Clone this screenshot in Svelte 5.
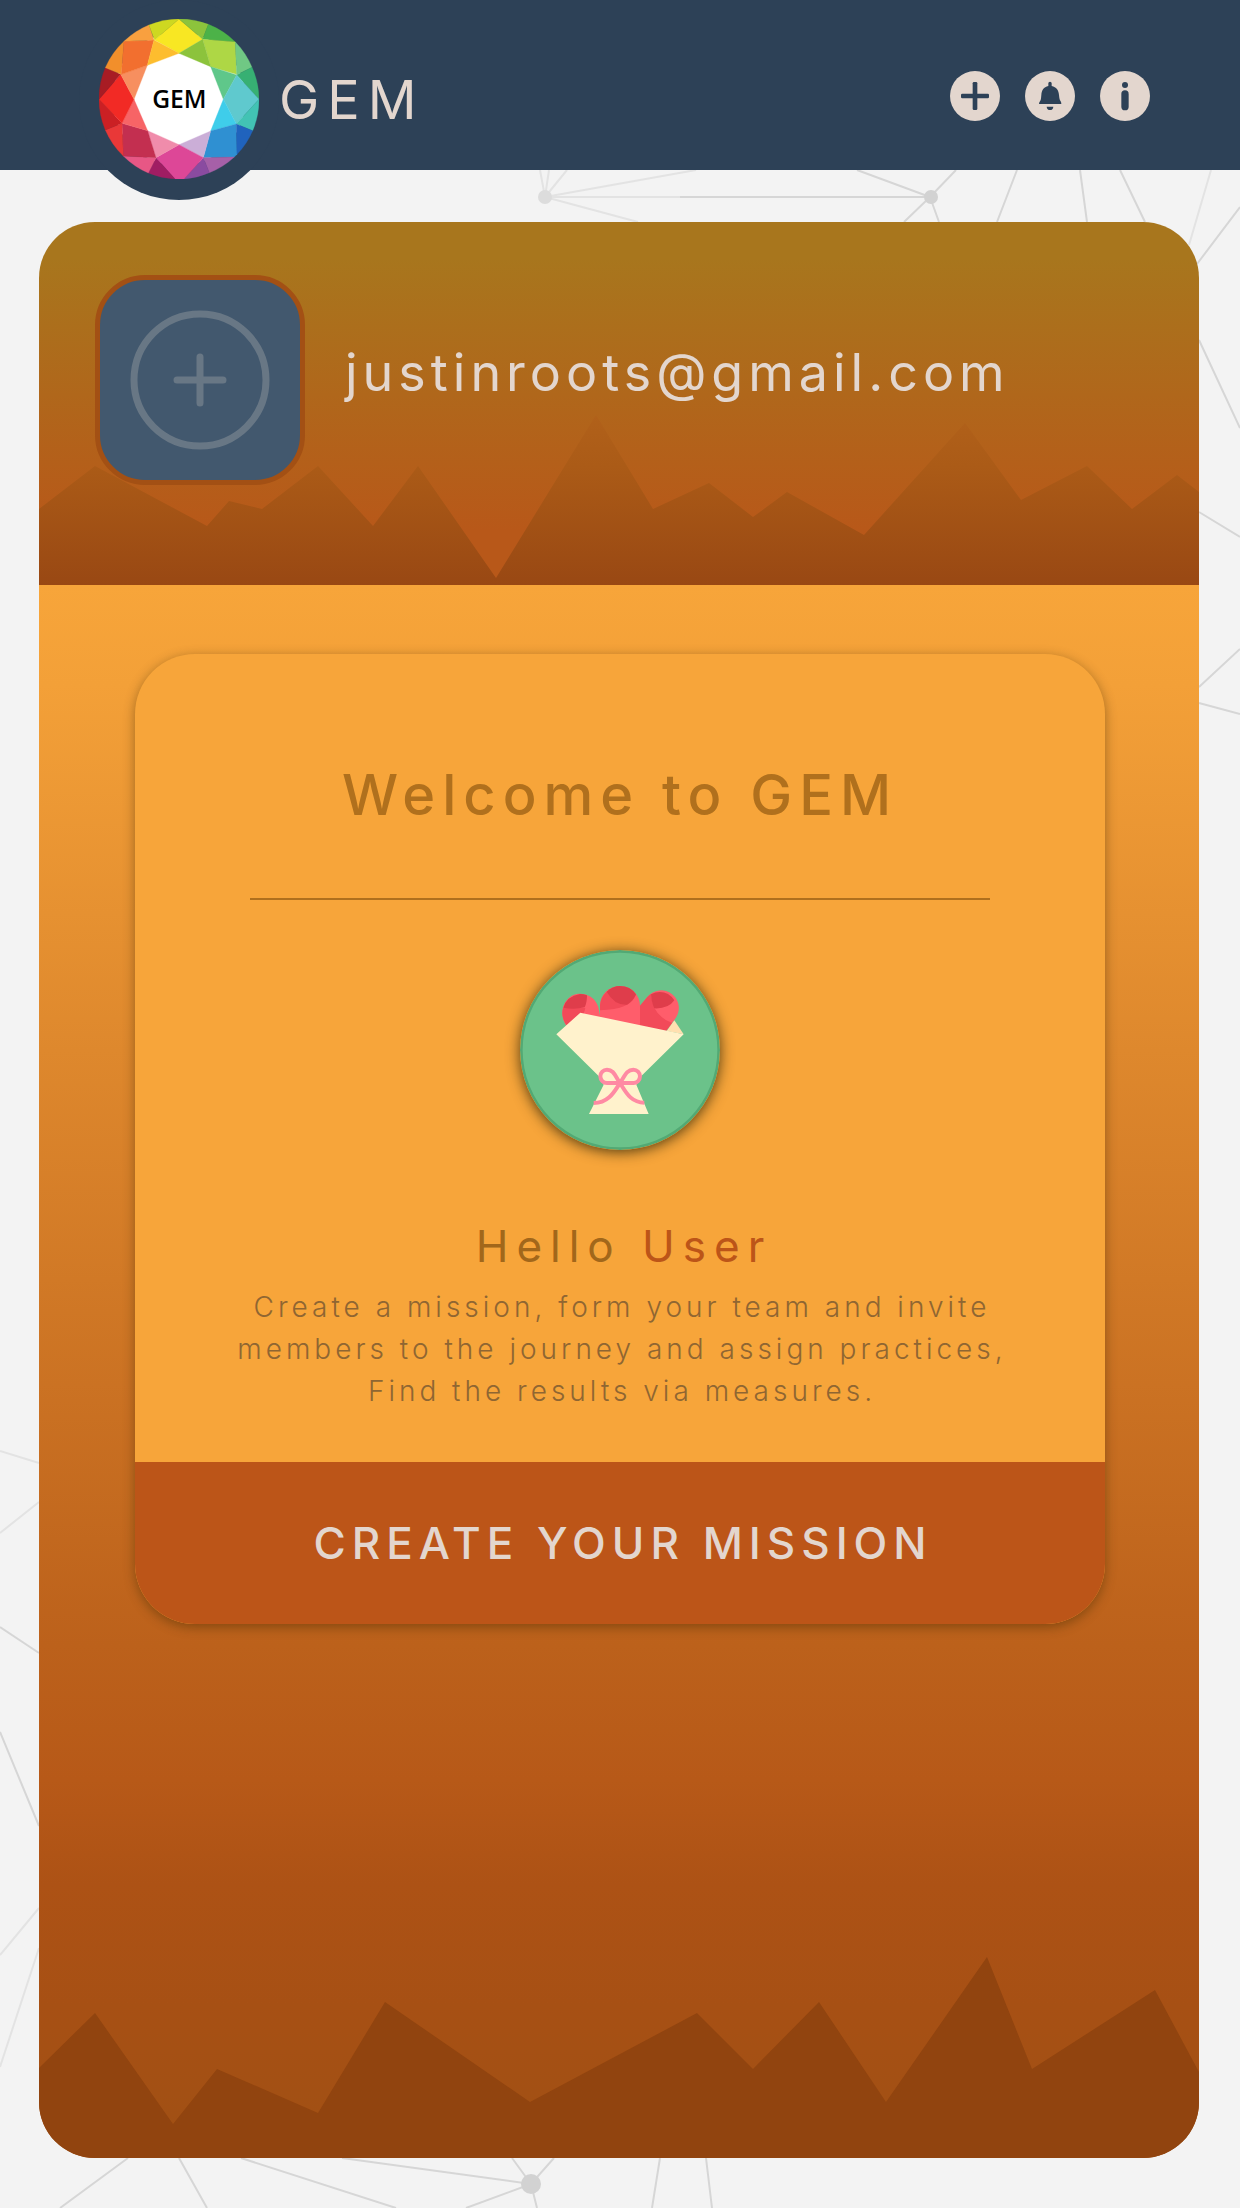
<script>
  const facets = [
    ['#f8e723', 'M297 57L368 118L297 160L224 120Z'],
    ['#8cc33c', 'M297 57A240 240 0 0 1 385 73L368 118Z'],
    ['#4cb248', 'M385 73A240 240 0 0 1 466 126L368 118Z'],
    ['#aed745', 'M368 118L466 126L470 223L392 200Z'],
    ['#8cc33c', 'M297 160L368 118L392 200Z'],
    ['#70c884', 'M466 126A240 240 0 0 1 516 202L470 224Z'],
    ['#37b073', 'M516 202A240 240 0 0 1 537 298L470 225Z'],
    ['#5fc78a', 'M392 200L470 225L430 298Z'],
    ['#5fc9ce', 'M470 225L537 298L469 372L430 298Z'],
    ['#42c3b4', 'M537 298A240 240 0 0 1 518 392L469 372Z'],
    ['#3fcdea', 'M430 298L469 372L392 393Z'],
    ['#2f90d2', 'M392 393L469 372L471 463L463 471L370 473Z'],
    ['#2063bd', 'M518 392A240 240 0 0 1 471 463L469 372Z'],
    ['#cbaed7', 'M297 434L392 393L370 473Z'],
    ['#a660a8', 'M463 471A240 240 0 0 1 388 518L370 473Z'],
    ['#8a4ba0', 'M388 518A240 240 0 0 1 312 537L370 473Z'],
    ['#dd4797', 'M297 434L370 473L312 537L285 537L228 473Z'],
    ['#a01d63', 'M285 537A240 240 0 0 1 205 519L228 473Z'],
    ['#f08cab', 'M203 392L297 434L228 473Z'],
    ['#e75785', 'M205 519A240 240 0 0 1 130 468L228 473Z'],
    ['#c32f50', 'M126 370L203 392L228 473L130 468Z'],
    ['#e93838', 'M130 468A240 240 0 0 1 76 390L126 370Z'],
    ['#f76466', 'M162 298L203 392L126 370Z'],
    ['#cb2024', 'M76 390A240 240 0 0 1 57 298L126 370Z'],
    ['#f22a25', 'M57 298L122 223L162 298L126 370Z'],
    ['#a81c24', 'M57 298A240 240 0 0 1 76 203L122 223Z'],
    ['#f78f5f', 'M122 223L202 196L162 298Z'],
    ['#f28f2b', 'M76 203A240 240 0 0 1 132 124L124 223Z'],
    ['#f26f2f', 'M132 124L222 120L202 196L124 223Z'],
    ['#f9a03f', 'M132 124A240 240 0 0 1 207 75L222 120Z'],
    ['#fdbd2e', 'M222 120L297 160L202 196Z'],
    ['#ced821', 'M207 75A240 240 0 0 1 297 57L224 120Z']
  ];
</script>

<div class="page">
  <svg class="web" viewBox="0 0 1240 2208" preserveAspectRatio="none" aria-hidden="true">
    <path class="faint" d="M545 197L540 170M545 197L549 170M545 197L567 170M545 197L696 170M545 197L638 222M545 197H680M1211 170L1189 245M0 1451L39 1463M0 1533L39 1502M0 1955L39 1908M0 2067L39 1948" />
    <path d="M680 197H930M930 197L857 170M930 197L956 170M930 197L904 222M930 197L939 222M1017 170L997 222M1080 170L1087 222M1120 170L1145 222M1240 207L1197 264M1199 340L1240 428M1199 512L1240 537M1199 687L1240 649M1199 703L1240 714M0 1627L39 1653M0 1732L39 1826M128 2158L60 2208M179 2158L207 2208M241 2158L396 2208M342 2158L531 2184L466 2208M512 2158L531 2184L554 2158M531 2184L537 2208M660 2158L652 2208M706 2158L712 2208" />
    <circle class="pale" cx="545" cy="197" r="7" />
    <circle cx="931" cy="197" r="7" />
    <circle cx="531" cy="2184" r="10" />
  </svg>

  <header class="topbar">
    <a class="brand" href="/">
      <span class="logo">
        <svg viewBox="57 57 480 480" aria-hidden="true">
          <circle cx="297" cy="297" r="200" fill="#fff" />
          {#each facets as [fill, d]}
            <path {d} {fill} stroke={fill} />
          {/each}
          <text x="298" y="324" text-anchor="middle">GEM</text>
        </svg>
      </span>
      <span class="name">GEM</span>
    </a>
    <nav class="actions" aria-label="Quick actions">
      <button type="button" aria-label="Add">
        <svg viewBox="90 63 150 150" aria-hidden="true">
          <rect x="123" y="131" width="84" height="14" rx="4" />
          <rect x="158" y="96" width="14" height="84" rx="4" />
        </svg>
      </button>
      <button type="button" aria-label="Notifications">
        <svg viewBox="315 63 150 150" aria-hidden="true">
          <path d="M385 100a5 5 0 0 1 10 0v8c14 3 21 13 22 27c1 11 2 15 5 19q2 3 2 8h-67q0-5 3-8c3-4 3-8 4-19c1-14 7-24 21-27z" />
          <path d="M380 170h20q-1 10-10 10t-10-10z" />
        </svg>
      </button>
      <button type="button" aria-label="Information">
        <svg viewBox="537 63 150 150" aria-hidden="true">
          <circle cx="612" cy="105" r="9" />
          <rect x="601" y="121" width="22" height="60" rx="11" />
        </svg>
      </button>
    </nav>
  </header>

  <main class="panel">
    <section class="banner">
      <svg class="peaks" viewBox="0 0 1160 170" preserveAspectRatio="none" aria-hidden="true">
        <defs>
          <linearGradient id="ridge" x1="0" y1="0" x2="0" y2="1">
            <stop offset="0" stop-color="#b1611a" />
            <stop offset="0.3" stop-color="#ab5b17" />
            <stop offset="1" stop-color="#994813" />
          </linearGradient>
        </defs>
        <path fill="url(#ridge)" d="M0 94L56 51L168 111L190 86L223 94L279 51L334 111L379 51L457 163L557 0L614 94L670 68L714 102L748 77L825 120L926 8L982 85L1048 51L1093 94L1138 60L1160 77V170H0Z" />
      </svg>
      <button class="avatar" type="button" aria-label="Add profile picture">
        <svg viewBox="0 0 140 140" aria-hidden="true">
          <circle cx="70" cy="70" r="66" />
          <path d="M70 47V93M47 70H93" />
        </svg>
      </button>
      <p class="email">justinroots@gmail.com</p>
    </section>

    <section class="content">
      <article class="card">
        <h1>Welcome to GEM</h1>
        <hr />
        <svg class="bouquet" viewBox="120 90 600 600" aria-hidden="true">
          <circle cx="420" cy="390" r="296" fill="#6bc28a" stroke="#53a974" stroke-width="8" />
          <path fill="#ff5d6b" d="M247 278a55 56 0 0 1 108-16l8 40l-90 30q-26-20-26-54z" />
          <path fill="#f24a59" d="M247 278q0-8 3-14h66q-4 22-20 34l-30 24q-19-18-19-44z" />
          <path fill="#df3d4b" d="M250 263q10-34 50-41q11 0 21 4q0 22-7 36q-32 8-64 1z" />
          <path fill="#ff5d6b" d="M360 258a60 60 0 0 1 120 0v70H360z" />
          <path fill="#f24a59" d="M360 271v-16q2-24 20-40l88 8q-14 46-108 48z" />
          <path fill="#df3d4b" d="M380 215q17-17 40-17q31 0 48 25q-8 20-27 31q-38 2-61-39z" />
          <path fill="#ff5d6b" d="M480 257l22-26a53 53 0 0 1 83 66l-27 36l-78-14z" />
          <path fill="#f24a59" d="M480 257l22-26q6-6 11-9q4 66 64 87l-19 24l-78-14z" />
          <path fill="#df3d4b" d="M513 223q13-7 26-7q28 0 44 25q-18 26-60 24q-8-15-10-42z" />
          <path fill="#ffe0b0" d="M583 301L611 343L560 333Z" />
          <path fill="#fff2cc" d="M301 278L611 343L484 468L469 494L506 582H327L371 494L356 468L229 343Z" />
          <g fill="none" stroke="#ff8aa3" stroke-width="12">
            <path d="M420 489H381a20 20 0 0 1 0-40c20 0 24 18 39 40s30 59 73 59" />
            <path d="M420 489H460a20 20 0 0 0 0-40c-20 0-25 18-40 40s-32 60-79 60" />
          </g>
        </svg>
        <h2>Hello <span>User</span></h2>
        <p class="intro">
          Create a mission, form your team and invite<br />
          members to the journey and assign practices,<br />
          Find the results via measures.
        </p>
        <button class="cta" type="button">CREATE YOUR MISSION</button>
      </article>
      <svg class="hills" viewBox="0 0 1160 201" preserveAspectRatio="none" aria-hidden="true">
        <path d="M0 111L56 56L134 167L178 112L279 156L346 45L491 145L658 56L714 112L780 45L847 145L948 0L993 112L1116 33L1160 115V201H0Z" />
      </svg>
    </section>
  </main>
</div>

<style>
  :global(body) {
    margin: 0;
    background: #f3f3f3;
  }

  .page {
    position: relative;
    padding-bottom: 50px;
    font-family: Inter, "Liberation Sans", sans-serif;
    overflow: hidden;
  }

  button {
    border: 0;
    padding: 0;
    font: inherit;
    cursor: pointer;
  }

  svg {
    display: block;
  }

  .web {
    position: absolute;
    inset: 0;
    width: 100%;
    height: 100%;
    fill: #d2d2d2;
  }

  .web path {
    fill: none;
    stroke: #d6d6d6;
    stroke-width: 2;
  }

  .web .faint {
    stroke: #e3e3e3;
  }

  .web .pale {
    fill: #dcdcdc;
  }

  .topbar {
    position: relative;
    display: flex;
    justify-content: space-between;
    align-items: flex-start;
    height: 170px;
    padding: 0 90px 0 79px;
    background: #2d4157;
  }

  .brand {
    display: flex;
    align-items: center;
    color: #e3d6ce;
    text-decoration: none;
  }

  .logo {
    padding: 19px 20px 21px;
    border-radius: 50%;
    background: #2d4157;
  }

  .logo svg {
    width: 160px;
    height: 160px;
  }

  .logo text {
    font-family: "Open Sans", sans-serif;
    font-size: 74px;
    font-weight: 600;
  }

  .name {
    font-size: 54px;
    line-height: 60px;
    letter-spacing: 8px;
  }

  .actions {
    display: flex;
    gap: 25px;
    padding-top: 71px;
  }

  .actions button {
    width: 50px;
    height: 50px;
    border-radius: 50%;
    background: #e3d6ce;
    fill: #2d4157;
  }

  .panel {
    position: relative;
    margin: 52px 41px 0 39px;
    border-radius: 56px;
    overflow: hidden;
  }

  .banner {
    position: relative;
    display: flex;
    align-items: flex-start;
    gap: 40px;
    box-sizing: border-box;
    height: 363px;
    padding: 53px 56px;
    background: linear-gradient(#a8761d 10%, #b85819 85%);
  }

  .peaks {
    position: absolute;
    left: 0;
    bottom: 0;
    width: 100%;
    height: 170px;
  }

  .avatar {
    position: relative;
    display: grid;
    place-items: center;
    flex: none;
    width: 210px;
    height: 210px;
    border: 5px solid #a35014;
    border-radius: 50px;
    background: #42586e;
  }

  .avatar svg {
    width: 140px;
    height: 140px;
    fill: none;
    stroke: #687785;
    stroke-width: 7;
    stroke-linecap: round;
  }

  .email {
    position: relative;
    margin: 63px 0 0;
    color: #e3d6ce;
    font-size: 52px;
    line-height: 70px;
    letter-spacing: 5px;
  }

  .content {
    padding-top: 69px;
    background: linear-gradient(#f7a53a 0, #f3a038 100px, #bc611b 1060px, #b75918 1195px, #ad5215 1300px, #a75014 1420px, #a05014 100%);
  }

  .card {
    display: flex;
    flex-direction: column;
    align-items: center;
    margin: 0 94px 333px 96px;
    padding-top: 101px;
    border-radius: 60px;
    overflow: hidden;
    background: #f7a53a;
    box-shadow: 0 3px 12px rgba(60, 40, 0, 0.45);
    text-align: center;
  }

  h1,
  h2,
  .intro {
    margin: 0;
    font-weight: 400;
  }

  h1 {
    color: #b0701d;
    font-size: 56px;
    font-weight: 500;
    line-height: 80px;
    letter-spacing: 7px;
  }

  hr {
    align-self: stretch;
    height: 2px;
    margin: 63px 115px 50px;
    border: 0;
    background: #b0701d;
  }

  .bouquet {
    width: 200px;
    height: 200px;
    border-radius: 50%;
    box-shadow: 0 2px 14px rgba(50, 40, 10, 0.85);
  }

  h2 {
    margin-top: 66px;
    padding-left: 8px;
    color: #a2671a;
    font-size: 44px;
    line-height: 60px;
    letter-spacing: 8px;
  }

  h2 span {
    color: #bc5518;
  }

  .intro {
    margin: 10px 0 50px;
    padding-left: 4px;
    color: #8f6632;
    font-size: 28px;
    font-weight: 300;
    line-height: 42px;
    letter-spacing: 4px;
  }

  .cta {
    align-self: stretch;
    height: 162px;
    padding-left: 6px;
    background: #bc5518;
    color: #e3d6ce;
    font-size: 44px;
    font-weight: 500;
    letter-spacing: 6px;
  }

  .hills {
    width: 100%;
    height: 201px;
    fill: #91440f;
  }
</style>
